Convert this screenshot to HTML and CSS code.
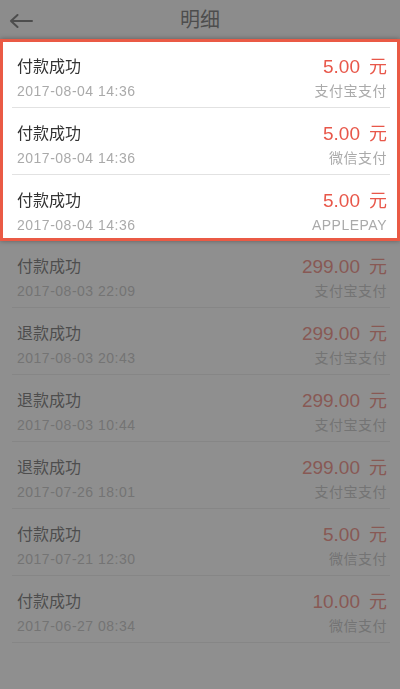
FILE: index.html
```html
<!DOCTYPE html>
<html lang="zh-CN">
<head>
  <meta charset="UTF-8">
  <meta name="viewport" content="width=device-width, initial-scale=1.0">
  <title>明细</title>
  <link rel="stylesheet" href="styles.css">
</head>
<body>

  <div class="header">
    <svg class="back" width="24" height="14" viewBox="0 0 24 14">
      <path d="M2 7 H23 M8.5 1 L2 7 L8.5 13" fill="none" stroke="#333" stroke-width="2" stroke-linecap="round" stroke-linejoin="round"/>
    </svg>
    <h1>明细</h1>
  </div>

  <!-- dark mask, the highlighted rows sit above it -->
  <div class="mask"></div>

  <div class="list">
    <div class="highlight">
      <div class="row">
        <div class="left">
          <p class="title">付款成功</p>
          <p class="date">2017-08-04 14:36</p>
        </div>
        <div class="right">
          <p class="amount">5.00<span class="unit">元</span></p>
          <p class="method">支付宝支付</p>
        </div>
      </div>
      <div class="row">
        <div class="left">
          <p class="title">付款成功</p>
          <p class="date">2017-08-04 14:36</p>
        </div>
        <div class="right">
          <p class="amount">5.00<span class="unit">元</span></p>
          <p class="method">微信支付</p>
        </div>
      </div>
      <div class="row last">
        <div class="left">
          <p class="title">付款成功</p>
          <p class="date">2017-08-04 14:36</p>
        </div>
        <div class="right">
          <p class="amount">5.00<span class="unit">元</span></p>
          <p class="method">APPLEPAY</p>
        </div>
      </div>
    </div>

    <div class="row">
      <div class="left">
        <p class="title">付款成功</p>
        <p class="date">2017-08-03 22:09</p>
      </div>
      <div class="right">
        <p class="amount">299.00<span class="unit">元</span></p>
        <p class="method">支付宝支付</p>
      </div>
    </div>
    <div class="row">
      <div class="left">
        <p class="title">退款成功</p>
        <p class="date">2017-08-03 20:43</p>
      </div>
      <div class="right">
        <p class="amount">299.00<span class="unit">元</span></p>
        <p class="method">支付宝支付</p>
      </div>
    </div>
    <div class="row">
      <div class="left">
        <p class="title">退款成功</p>
        <p class="date">2017-08-03 10:44</p>
      </div>
      <div class="right">
        <p class="amount">299.00<span class="unit">元</span></p>
        <p class="method">支付宝支付</p>
      </div>
    </div>
    <div class="row">
      <div class="left">
        <p class="title">退款成功</p>
        <p class="date">2017-07-26 18:01</p>
      </div>
      <div class="right">
        <p class="amount">299.00<span class="unit">元</span></p>
        <p class="method">支付宝支付</p>
      </div>
    </div>
    <div class="row">
      <div class="left">
        <p class="title">付款成功</p>
        <p class="date">2017-07-21 12:30</p>
      </div>
      <div class="right">
        <p class="amount">5.00<span class="unit">元</span></p>
        <p class="method">微信支付</p>
      </div>
    </div>
    <div class="row">
      <div class="left">
        <p class="title">付款成功</p>
        <p class="date">2017-06-27 08:34</p>
      </div>
      <div class="right">
        <p class="amount">10.00<span class="unit">元</span></p>
        <p class="method">微信支付</p>
      </div>
    </div>
  </div>

</body>
</html>
```

FILE: styles.css
```css
body {
  margin: 0;
  background-color: #fff;
  font-family: 'Liberation Sans', 'Noto Sans CJK SC', sans-serif;
  height: 689px;
  overflow: hidden;
}

p {
  margin: 0;
}

.header {
  height: 41px;
  background-color: #f4f4f4;
  display: flex;
  align-items: center;
  justify-content: center;
  position: relative;
}

.header h1 {
  margin: 0;
  font-size: 20px;
  font-weight: normal;
  color: #333;
  line-height: 41px;
}

.back {
  position: absolute;
  left: 9px;
  top: 14px;
}

/* Overlay */
.mask {
  position: fixed;
  top: 0;
  left: 0;
  right: 0;
  bottom: 0;
  background-color: rgba(90, 90, 90, 0.68);
  z-index: 1;
}

.highlight {
  position: relative;
  z-index: 2;
  background-color: #fff;
  margin-top: -2px;
  padding-top: 2px;
  box-shadow: inset 0 0 0 3px #ea5a45, 0 0 5px rgba(0, 0, 0, 0.35);
}

.row {
  height: 67px;
  box-sizing: border-box;
  margin: 0 10px 0 12px;
  padding: 14px 3px 0 5px;
  border-bottom: 1px solid #e2e2e2;
  display: flex;
  justify-content: space-between;
}

.row.last {
  border-bottom: none;
  height: 66px;
}

.title {
  font-size: 16px;
  line-height: 24px;
  color: #333;
}

.date {
  margin-top: 2px;
  font-size: 14px;
  line-height: 20px;
  letter-spacing: 0.5px;
  color: #aaa;
}

.right {
  text-align: right;
}

.amount {
  font-size: 19px;
  line-height: 24px;
  color: #e8574a;
}

.amount .unit {
  margin-left: 9px;
  font-size: 18px;
}

.method {
  margin-top: 2px;
  font-size: 14px;
  line-height: 20px;
  letter-spacing: 0.5px;
  color: #aaa;
}
```
